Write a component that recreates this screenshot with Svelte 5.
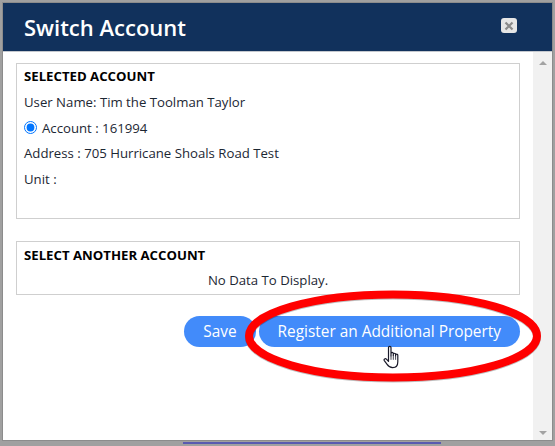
<script lang="ts">
	let account = $state('161994');
</script>

<div class="backdrop">
	<div class="dialog">
		<header class="title-bar">
			<h1>Switch Account</h1>
			<button class="close" aria-label="Close">
				<svg viewBox="0 0 10 10" width="10" height="10">
					<path d="M1.5 1.5 8.5 8.5M8.5 1.5 1.5 8.5" stroke="#8a8a8a" stroke-width="2.2" fill="none" />
				</svg>
			</button>
		</header>
		<div class="body">
			<div class="content">
				<section class="panel selected">
					<h2>SELECTED ACCOUNT</h2>
					<p>User Name: Tim the Toolman Taylor</p>
					<label>
						<input type="radio" bind:group={account} value="161994" />
						Account : 161994
					</label>
					<p>Address : 705 Hurricane Shoals Road Test</p>
					<p>Unit :</p>
				</section>
				<section class="panel other">
					<h2>SELECT ANOTHER ACCOUNT</h2>
					<p class="empty">No Data To Display.</p>
				</section>
				<div class="actions">
					<button class="pill">Save</button>
					<button class="pill">Register an Additional Property</button>
				</div>
			</div>
			<div class="scrollbar">
				<span class="arrow up"></span>
				<span class="arrow down"></span>
			</div>
		</div>
	</div>

	<div class="link-strip"></div>

	<svg class="ring" viewBox="0 0 555 446" width="555" height="446">
		<ellipse cx="393" cy="337" rx="144" ry="41.5" fill="none" stroke="#000" stroke-opacity="0.25" stroke-width="8" />
		<ellipse cx="393" cy="336" rx="144" ry="41.5" fill="none" stroke="#ff0000" stroke-width="8" />
	</svg>

	<svg class="cursor" viewBox="0 0 20 26" width="20" height="26">
		<path
			d="M5.5 2.6c0-1.6 2.5-1.6 2.5 0v8.2l0-2.4c0-1.3 2.3-1.3 2.3 0v2l0-1.2c0-1.3 2.3-1.3 2.3 0v1.6l0-.7c0-1.3 2.2-1.3 2.2 0v6.6c0 3-1.6 5.9-5.1 5.9-3 0-4.3-1.2-5.6-3.2L1.3 15.6c-.8-1.5 1-2.5 2.1-1.4l2.1 2.2z"
			fill="#fff"
			stroke="#1a1a2a"
			stroke-width="1.2"
			stroke-linejoin="round"
		/>
		<path d="M8 10.8v4M10.3 10.4v4.4M12.6 10.8v4" stroke="#1a1a2a" stroke-width="0.8" fill="none" />
	</svg>
</div>

<style>
	:global(body) {
		margin: 0;
	}

	.backdrop {
		position: relative;
		width: 555px;
		height: 446px;
		padding: 3px 3px 6px 3px;
		box-sizing: border-box;
		background: #a0a0a0;
		overflow: hidden;
		font-family: "Open Sans", "Liberation Sans", sans-serif;
	}

	.dialog {
		height: 100%;
		display: flex;
		flex-direction: column;
		background: #fff;
		box-shadow: 0 0 0 1px #8c8c8c;
	}

	.title-bar {
		flex: none;
		height: 49px;
		box-sizing: border-box;
		display: flex;
		align-items: center;
		justify-content: space-between;
		padding: 0 35px 0 21px;
		background: #11315c;
		border-bottom: 1px solid #c4c8ce;
	}

	h1 {
		margin: 0;
		font-size: 22px;
		font-weight: 600;
		color: #fff;
	}

	.close {
		width: 16px;
		height: 15px;
		margin-bottom: 3px;
		padding: 0;
		display: flex;
		align-items: center;
		justify-content: center;
		background: #e6e6e6;
		border: none;
		border-radius: 3px;
	}

	.body {
		flex: 1;
		display: flex;
		min-height: 0;
	}

	.content {
		flex: 1;
		padding: 11px 13px 0 13px;
	}

	.panel {
		box-sizing: border-box;
		border: 1px solid #cfcfcf;
		padding: 4px 7px 0 7px;
		font-size: 13.2px;
		color: #1c2733;
	}

	.panel.selected {
		height: 156px;
	}

	.panel.other {
		height: 54px;
		margin-top: 22px;
		padding-top: 5px;
	}

	h2 {
		margin: 0;
		font-size: 13.2px;
		line-height: 17px;
		font-weight: 700;
		color: #000;
	}

	.panel p,
	.panel label {
		display: flex;
		align-items: center;
		margin: 0;
		height: 17px;
		margin-top: 8.6px;
	}

	.panel label {
		gap: 5px;
	}

	input[type='radio'] {
		width: 13px;
		height: 13px;
		margin: 0;
		accent-color: #0075ff;
	}

	.panel p.empty {
		justify-content: center;
		margin-top: 7px;
		height: 17px;
	}

	.actions {
		display: flex;
		justify-content: flex-end;
		gap: 3px;
		margin-top: 21px;
	}

	.pill {
		height: 31px;
		padding: 0 19px;
		border: none;
		border-radius: 16px;
		background: #428bfa;
		color: #fff;
		font-family: inherit;
		font-size: 15.4px;
	}

	.scrollbar {
		flex: none;
		width: 19px;
		display: flex;
		flex-direction: column;
		justify-content: space-between;
		align-items: center;
		padding: 9px 0 5px;
		background: #f1f1f1;
	}

	.arrow {
		width: 0;
		height: 0;
		border-left: 4px solid transparent;
		border-right: 4px solid transparent;
	}

	.arrow.up {
		border-bottom: 4px solid #a3a3a3;
	}

	.arrow.down {
		border-top: 4px solid #a3a3a3;
	}

	.link-strip {
		position: absolute;
		left: 183px;
		top: 442px;
		width: 258px;
		height: 2px;
		background: #5a5ab0;
	}

	.ring {
		position: absolute;
		left: 0;
		top: 0;
		pointer-events: none;
	}

	.cursor {
		position: absolute;
		left: 383px;
		top: 345px;
		pointer-events: none;
	}
</style>
